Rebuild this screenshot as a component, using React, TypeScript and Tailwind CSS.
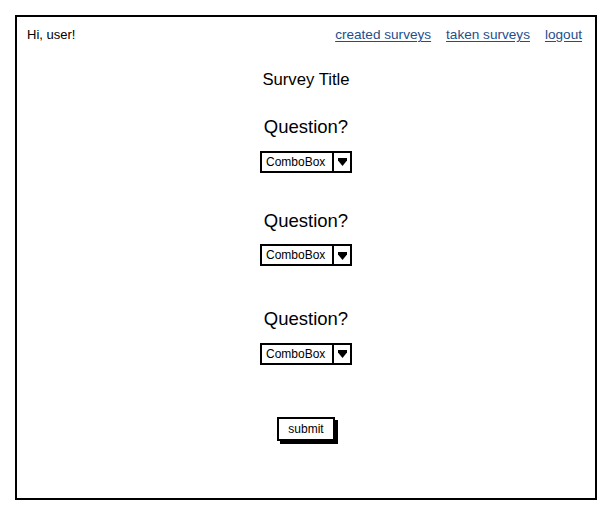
const font = { fontFamily: '"Liberation Sans", Arial, sans-serif' };

function ComboBox() {
  return (
    <div className="flex h-[22px] w-[92px] items-stretch border-2 border-black bg-white">
      <div className="flex flex-1 items-center pl-[4px] text-[12px] leading-none text-black">
        ComboBox
      </div>
      <div className="flex w-[18px] items-center justify-center border-l-2 border-black">
        <svg width="11" height="11" viewBox="0 0 11 11">
          <path d="M1 2 H10 V4.5 L5.5 10 L1 4.5 Z" fill="black" />
        </svg>
      </div>
    </div>
  );
}

function Question() {
  return (
    <div className="flex flex-col items-center">
      <div className="text-[18.5px] leading-none text-black">Question?</div>
      <div className="mt-[14px]">
        <ComboBox />
      </div>
    </div>
  );
}

export default function App() {
  return (
    <div className="h-[516px] w-[611px] bg-white pl-[15px] pt-[15px]" style={font}>
      <div className="flex h-[485px] w-[582px] flex-col border-2 border-black">
        <div className="flex items-center justify-between pl-[10px] pr-[13px] pt-[11px] text-[13.6px] leading-none">
          <span className="text-[13px] text-black">Hi, user!</span>
          <div className="flex gap-[15px] text-[#1e4e8c]">
            <a className="underline underline-offset-2">created surveys</a>
            <a className="underline underline-offset-2">taken surveys</a>
            <a className="underline underline-offset-2">logout</a>
          </div>
        </div>
        <div className="flex flex-col items-center">
          <div className="mt-[30px] text-[16.7px] leading-none text-black">Survey Title</div>
          <div className="mt-[30px]">
            <Question />
          </div>
          <div className="mt-[39px]">
            <Question />
          </div>
          <div className="mt-[44px]">
            <Question />
          </div>
          <button className="mt-[52px] h-[24px] border-2 border-black px-[9px] text-[12px] leading-none text-black shadow-[3px_3px_0_0_#000]">
            submit
          </button>
        </div>
      </div>
    </div>
  );
}
